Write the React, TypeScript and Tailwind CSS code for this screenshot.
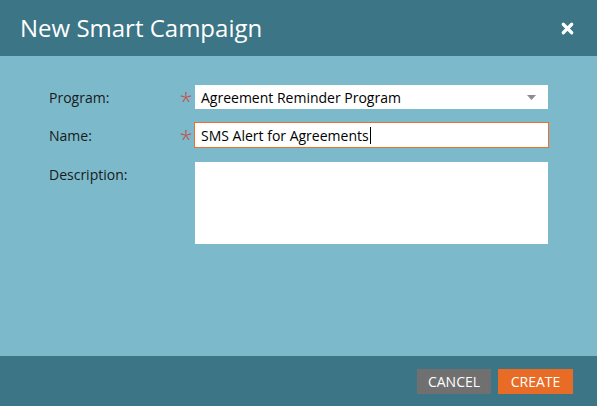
import React from 'react';
import { X } from 'lucide-react';

const Required = () => (
  <span className="w-[18px] text-[24px] leading-none font-light text-[#c5524c] pt-[8px] text-center">*</span>
);

export default function App() {
  return (
    <div className="w-[597px] h-[406px] flex flex-col font-['Open_Sans',sans-serif] bg-[#7bb9cb]">
      {/* header */}
      <header className="h-[56px] bg-[#3b7586] flex items-center justify-between pl-[20px] pr-[21px] shrink-0">
        <h1 className="text-white text-[24px] leading-none">New Smart Campaign</h1>
        <X className="text-white" size={17} strokeWidth={4.5} />
      </header>

      {/* form */}
      <main className="flex-1 pt-[29px] pl-[49px] text-[14px] text-[#1a1a1a]">
        <div className="flex items-center h-[24px]">
          <label className="w-[128px]">Program:</label>
          <Required />
          <div className="w-[353px] h-[24px] bg-white flex items-center justify-between pl-[6px] pr-[12px] text-[14px] text-black">
            <span>Agreement Reminder Program</span>
            <svg width="9" height="5" viewBox="0 0 9 5"><path d="M0 0h9L4.5 5z" fill="#8c8c8c" /></svg>
          </div>
        </div>

        <div className="flex items-center h-[26px] mt-[13px]">
          <label className="w-[128px]">Name:</label>
          <Required />
          <div className="-ml-[1px] w-[355px] h-[26px] bg-white border border-[#ec6f2c] flex items-center pl-[6px] text-[14px] text-black">
            <span>SMS Alert for Agreements</span>
            <span className="w-px h-[17px] bg-black ml-px" />
          </div>
        </div>

        <div className="flex items-start mt-[14px]">
          <label className="w-[146px] pt-[2px]">Description:</label>
          <div className="w-[353px] h-[82px] bg-white" />
        </div>
      </main>

      {/* footer */}
      <footer className="h-[50px] bg-[#3b7586] flex items-center justify-end gap-[7px] pr-[24px] shrink-0">
        <button className="w-[74px] h-[25px] bg-[#707070] text-white text-[14px]">CANCEL</button>
        <button className="w-[75px] h-[25px] bg-[#e86c26] text-white text-[14px]">CREATE</button>
      </footer>
    </div>
  );
}
